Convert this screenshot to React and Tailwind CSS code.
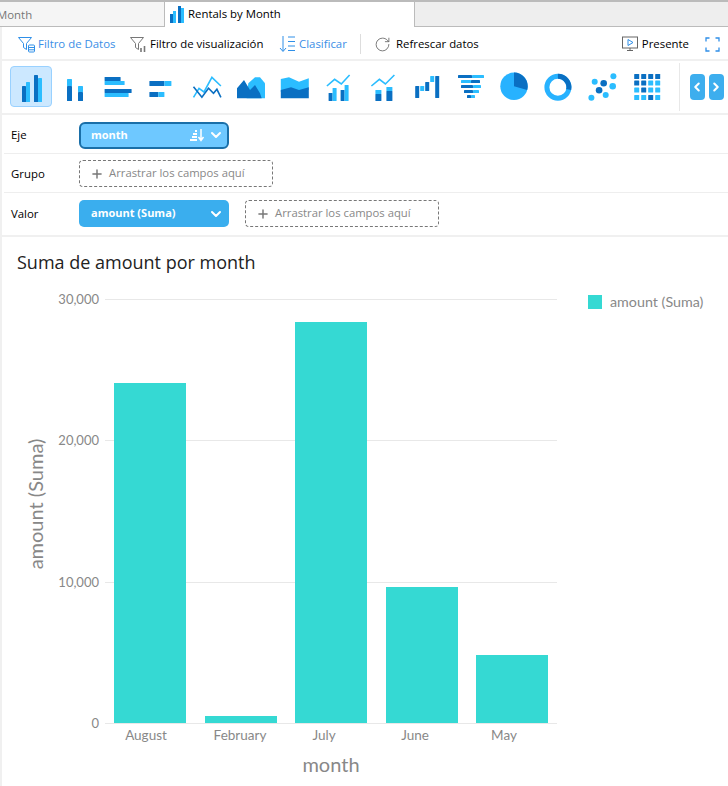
import React from 'react';
import { ChevronDown, ChevronLeft, ChevronRight, Plus, RotateCw } from 'lucide-react';

const D = '#0a6fc2';
const L = '#2bbdff';

const R = ({ x, y, w, h, c }) => <rect x={x} y={y} width={w} height={h} fill={c} rx="0.6" />;

const chartIcons = [
  <>
    <R x={12} y={20} w={4} h={16} c={D} /><R x={16} y={16} w={4} h={20} c={L} />
    <R x={24} y={9} w={4} h={27} c={D} /><R x={28} y={12} w={4} h={24} c={L} />
  </>,
  <>
    <R x={13} y={13} w={5} h={7} c={L} /><R x={13} y={20} w={5} h={15} c={D} />
    <R x={24} y={20} w={5} h={6} c={L} /><R x={24} y={26} w={5} h={9} c={D} />
  </>,
  <>
    <R x={6.6} y={11} w={16} h={4} c={D} /><R x={6.6} y={15} w={20} h={4} c={L} />
    <R x={6.6} y={23} w={27} h={4} c={D} /><R x={6.6} y={27} w={24} h={4} c={L} />
  </>,
  <>
    <R x={6.4} y={15} w={15} h={5} c={D} /><R x={21.4} y={15} w={7} h={5} c={L} />
    <R x={6.4} y={26} w={9} h={5} c={D} /><R x={15.4} y={26} w={6} h={5} c={L} />
  </>,
  <g fill="none" strokeWidth="1.6">
    <polyline points="6.5,31.3 12,22.3 17,26 24.9,11.3 33.9,20" stroke={L} />
    <polyline points="6.5,20.7 14.9,31.3 21.5,22.3 26.5,27.3 29.9,23.3 33.9,31.3" stroke={D} />
  </g>,
  <>
    <polygon points="17.3,17.3 24,11.3 29,11.3 34,17.3 34,32.3 15.7,32.3" fill={L} />
    <polygon points="6,22.3 13,14 19,24 24,19 29,27.3 30.7,32.3 6,32.3" fill={D} />
  </>,
  <>
    <polygon points="5.800,13 14,11.300 24,15.700 33.800,12.300 33.800,24 5.800,26" fill={L} />
    <polygon points="5.800,24 16,21.300 24,24 33.800,21.300 33.800,32.300 5.800,32.300" fill={D} />
  </>,
  <>
    <polyline points="7.9,20 15.6,13.3 22.3,18 30.6,9" fill="none" stroke={L} strokeWidth="1.6" />
    <R x={9.6} y={27} w={4} h={8} c={D} /><R x={13.6} y={22} w={4} h={13} c={L} />
    <R x={21.6} y={24} w={4} h={11} c={D} /><R x={25.6} y={19} w={4} h={16} c={L} />
  </>,
  <>
    <polyline points="7.4,20 15.4,13.3 21.4,18 30.4,9" fill="none" stroke={L} strokeWidth="1.6" />
    <R x={11.4} y={24} w={6} h={4} c={L} /><R x={11.4} y={28} w={6} h={7} c={D} />
    <R x={22.4} y={21} w={6} h={4} c={L} /><R x={22.4} y={25} w={6} h={10} c={D} />
  </>,
  <>
    <R x={7.2} y={20} w={4} h={12} c={D} /><R x={12.2} y={20} w={4} h={5} c={L} />
    <R x={17.2} y={16} w={4} h={9} c={D} /><R x={22.2} y={10} w={4} h={6} c={L} />
    <R x={27.2} y={10} w={4} h={22} c={D} />
  </>,
  <>
    <R x={6} y={9} w={14} h={3} c={D} /><R x={20} y={9} w={12} h={3} c={L} />
    <R x={9} y={14} w={10} h={3} c={L} /><R x={19} y={14} w={9} h={3} c={D} />
    <R x={9} y={19} w={12} h={3} c={D} /><R x={21} y={19} w={8} h={3} c={L} />
    <R x={12} y={24} w={9} h={3} c={D} /><R x={21} y={24} w={6} h={3} c={L} />
    <R x={15} y={29} w={4} h={3} c={D} /><R x={19} y={29} w={4} h={3} c={L} />
  </>,
  <>
    <circle cx="18" cy="20.3" r="13.7" fill="#27b2ff" />
    <path d="M18 20.3V6.6A13.7 13.7 0 0 1 31.2 24Z" fill={D} />
  </>,
  <>
    <circle cx="17.9" cy="21.3" r="11" fill="none" stroke="#27b2ff" strokeWidth="5" />
    <path d="M17.9 10.3A11 11 0 0 1 28.7 23.5" fill="none" stroke={D} strokeWidth="5" />
  </>,
  <>
    <circle cx="29.4" cy="10.3" r="3" fill={L} /><circle cx="10.7" cy="15.7" r="3" fill={L} />
    <circle cx="19.7" cy="17.3" r="3.3" fill={D} /><circle cx="28.7" cy="20.3" r="3.3" fill={L} />
    <circle cx="15.1" cy="24.3" r="3.3" fill={D} /><circle cx="21.7" cy="29" r="3" fill={L} />
    <circle cx="7.4" cy="31.7" r="3" fill={L} />
  </>,
  <>
    {[
      [D, D, D, D],
      [D, D, L, L],
      [L, D, L, L],
      [L, L, D, L],
    ].map((row, r) =>
      row.map((c, i) => (
        <R key={`${r}-${i}`} x={5.2 + i * 7} y={[8, 14.5, 21.5, 29][r]} w={5} h={5} c={c} />
      ))
    )}
  </>,
];

const bars = [
  { x: 114, y: 383, label: 'August', lx: 146 },
  { x: 205, y: 716, label: 'February', lx: 240 },
  { x: 295, y: 322, label: 'July', lx: 324 },
  { x: 386, y: 587, label: 'June', lx: 415 },
  { x: 476, y: 655, label: 'May', lx: 504 },
];

const ticks = [
  { y: 299, label: '30,000' },
  { y: 440, label: '20,000' },
  { y: 582, label: '10,000' },
  { y: 723, label: '0' },
];

function DropZone() {
  return (
    <div className="w-[194px] h-[27px] border border-dashed border-[#777] rounded-[4px] flex items-center pl-[10px] text-[#888] text-[11.3px]">
      <Plus size={14} strokeWidth={2.5} className="text-[#777] mr-[5px]" />
      Arrastrar los campos aquí
    </div>
  );
}

export default function App() {
  return (
    <div className="w-[728px] h-[786px] overflow-hidden bg-white text-[11.4px] text-black font-['Open_Sans','Noto_Sans',sans-serif]">
      {/* Tabs */}
      <div className="h-[27px] flex border-t-2 border-[#bbb] bg-[#eeeeee]">
        <div className="w-[165px] border-b border-r border-[#bbb] bg-[#f5f5f5] text-[#777] pt-[4px] overflow-hidden">
          <span className="block -ml-[3px]">Month</span>
        </div>
        <div className="w-[249px] bg-white flex items-center pl-[5px] pb-[1px] gap-[4px]">
          <svg width="14" height="18" viewBox="0 0 14 18">
            <rect x="0" y="9" width="4" height="9" fill={D} />
            <rect x="3" y="6" width="3" height="12" fill={L} />
            <rect x="8" y="1" width="3" height="17" fill={D} />
            <rect x="11" y="3" width="3" height="15" fill={L} />
          </svg>
          Rentals by Month
        </div>
        <div className="flex-1 border-l border-b border-[#bbb]" />
      </div>

      <div className="border-l-2 border-[#f0f0f0]">
        {/* Toolbar */}
        <div className="h-[34px] flex items-center pl-[16px] pt-[2px] border-b-2 border-[#f0f0f0]">
          <svg width="18" height="17" viewBox="0 0 18 17" fill="none" stroke="#2f8fe8" className="mr-[2px]">
            <path d="M.5 1.5h13l-5 6v6l-3-2v-4z" />
            <rect x="10.5" y="9" width="6" height="7" rx="1" />
            <path d="M10.5 11.5h6M10.5 13.8h6" />
          </svg>
          <span className="text-[#3a8ee6] w-[92px]">Filtro de Datos</span>
          <svg width="17" height="17" viewBox="0 0 17 17" fill="none" stroke="#777" className="mr-[3px]">
            <path d="M.5 1.5h13l-5 6v6l-3-2v-4z" />
            <path d="M11 12v4M14.5 10v6" strokeWidth="1.6" />
          </svg>
          <span className="w-[129px]">Filtro de visualización</span>
          <svg width="17" height="18" viewBox="0 0 17 18" fill="none" stroke="#2f8fe8" className="mr-[3px]">
            <path d="M4 1v15M1 13l3 3.500 3-3.500M9 2h7M9 6.500h7M9 11h7M9 15.500h7" />
          </svg>
          <span className="text-[#3a8ee6] w-[61px]">Clasificar</span>
          <div className="w-px h-[20px] bg-[#ddd] mr-[13px]" />
          <RotateCw size={17} strokeWidth={1.2} className="text-[#666] mr-[5px]" />
          <span>Refrescar datos</span>
          <svg width="16" height="17" viewBox="0 0 16 17" fill="none" stroke="#666" className="ml-auto mr-[4px]">
            <rect x="0.5" y="1" width="15" height="11" />
            <path d="M5 14.500h6M8 12v2.500" />
            <path d="M6 3.500l5 3-5 3z" stroke="#2f8fe8" />
          </svg>
          <span className="mr-[16px]">Presente</span>
          <svg width="15" height="15" viewBox="0 0 15 15" fill="none" stroke="#2f8fe8" strokeWidth="1.3" className="mr-[8px]">
            <path d="M1 4.500V1h3.500M10.500 1H14v3.500M14 10.500V14h-3.500M4.500 14H1v-3.500" />
          </svg>
        </div>

        {/* Chart types */}
        <div className="h-[54px] flex items-center pl-[8px] border-b-2 border-[#f0f0f0]">
          <div className="flex gap-[2.2px] mb-[2px]">
            {chartIcons.map((icon, i) => (
              <div
                key={i}
                className={`w-[42px] h-[41px] rounded-[4px] border ${i === 0 ? 'bg-[#cce8ff] border-[#99d1ff]' : 'border-transparent'}`}
              >
                <svg width="42" height="41" viewBox="1 1 42 41">{icon}</svg>
              </div>
            ))}
          </div>
          <div className="w-px h-[48px] bg-[#e8e8e8] ml-[8px] mr-[10px]" />
          <div className="flex gap-[4px]">
            <div className="w-[15px] h-[26px] rounded-[4px] bg-[#3daeee] flex items-center justify-center">
              <ChevronLeft size={14} strokeWidth={3.5} className="text-white" />
            </div>
            <div className="w-[15px] h-[26px] rounded-[4px] bg-[#3daeee] flex items-center justify-center">
              <ChevronRight size={14} strokeWidth={3.5} className="text-white" />
            </div>
          </div>
        </div>

        {/* Fields */}
        <div className="border-b-2 border-[#f0f0f0] pl-[2px]">
          <div className="h-[39px] flex items-center border-b border-[#eeeeee] pl-[7px] pt-[2px]">
            <span className="w-[68px]">Eje</span>
            <div className="w-[150px] h-[27px] rounded-[6px] border-2 border-[#1a6fa8] bg-[#6ec8ff] text-white font-bold text-[11px] flex items-center pl-[10px] pr-[3px]">
              month
              <svg width="16" height="14" viewBox="0 0 16 14" className="ml-auto mr-[2px]" fill="white">
                <path d="M5 2h2v2H5zM3 5h4v2H3zM2 8h5v2H2zM0 11h7v2H0z" />
                <path d="M11 1v11M8.500 9l2.500 3.500L13.500 9" fill="none" stroke="white" strokeWidth="1.500" />
              </svg>
              <ChevronDown size={16} strokeWidth={3} />
            </div>
          </div>
          <div className="h-[39px] flex items-center border-b border-[#eeeeee] pl-[7px] pt-[1px]">
            <span className="w-[68px]">Grupo</span>
            <DropZone />
          </div>
          <div className="h-[42px] flex items-center pl-[7px] pb-[1px]">
            <span className="w-[68px]">Valor</span>
            <div className="w-[150px] h-[27px] rounded-[5px] bg-[#3aaeee] text-white font-bold text-[11px] flex items-center pl-[12px] pr-[5px] mr-[16px]">
              amount (Suma)
              <ChevronDown size={16} strokeWidth={3} className="ml-auto" />
            </div>
            <DropZone />
          </div>
        </div>

        {/* Chart */}
        <div className="h-[25px] pl-[15px] pt-[13px] text-[18px] leading-[25px] text-[#222]">Suma de amount por month</div>
        <svg width="726" height="501" viewBox="2 285 726 501" className="mt-[23px] font-['Lato',sans-serif]">
          {ticks.map(t => (
            <g key={t.y}>
              <line x1="105" x2="557" y1={t.y + 0.5} y2={t.y + 0.5} stroke="#e8e8e8" />
              <text x="99" y={t.y + 5} textAnchor="end" fontSize="13" fill="#888">{t.label}</text>
            </g>
          ))}
          {bars.map(b => (
            <g key={b.label}>
              <rect x={b.x} y={b.y} width="72" height={723 - b.y} fill="#35d9d3" />
              <text x={b.lx} y="740" textAnchor="middle" fontSize="13.500" fill="#888">{b.label}</text>
            </g>
          ))}
          <text x="331" y="772" textAnchor="middle" fontSize="20" fill="#888">month</text>
          <text transform="translate(43 504) rotate(-90)" textAnchor="middle" fontSize="20" fill="#888">amount (Suma)</text>
          <rect x="588" y="295" width="14" height="14" fill="#35d9d3" />
          <text x="610" y="307" fontSize="14.300" fill="#888">amount (Suma)</text>
        </svg>
      </div>
    </div>
  );
}
